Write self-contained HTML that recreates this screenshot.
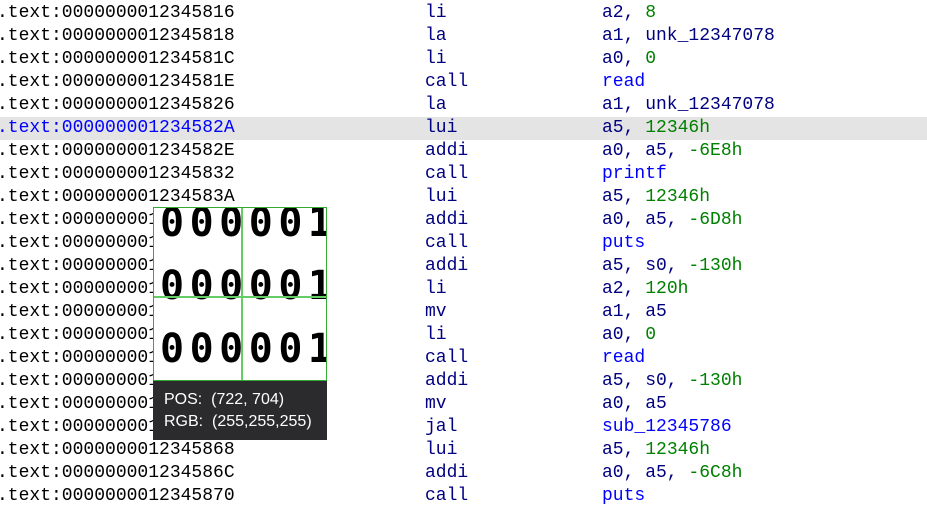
<!DOCTYPE html>
<html><head><style>
body{margin:0;width:927px;height:509px;overflow:hidden;background:#fff;font-family:"Liberation Mono",monospace;font-size:18px;position:relative}
.r{position:absolute;left:-3px;height:23px;line-height:23px;width:930px;white-space:pre}
.r span{position:absolute;top:0}
.a{left:0;color:#000}
.m{left:428px;color:#000080}
.o{left:605px;color:#000080}
.n{color:#008000}.f{color:#0000ff}
.hl{background:#e4e4e4}
#mag{position:absolute;left:153px;top:207px;width:172px;height:172px;border:1px solid #3a3;background:#fff;overflow:hidden}
#mag div{position:absolute;left:6px;font-family:"DejaVu Sans Mono",monospace;font-size:40px;font-weight:bold;color:#000;line-height:40px;letter-spacing:5.5px;white-space:pre}
#tip{position:absolute;left:153px;top:381px;width:174px;height:59px;background:#2b2b2d;color:#fff;font-family:"Liberation Sans",sans-serif;font-size:16px;line-height:22px;padding-top:8px;box-sizing:border-box;padding-left:11px}
</style></head><body>
<div class="r" style="top:2px"><span class="a">.text:0000000012345816</span><span class="m">li</span><span class="o">a2, <i class="n" style="font-style:normal">8</i></span></div>
<div class="r" style="top:25px"><span class="a">.text:0000000012345818</span><span class="m">la</span><span class="o">a1, unk_12347078</span></div>
<div class="r" style="top:48px"><span class="a">.text:000000001234581C</span><span class="m">li</span><span class="o">a0, <i class="n" style="font-style:normal">0</i></span></div>
<div class="r" style="top:71px"><span class="a">.text:000000001234581E</span><span class="m">call</span><span class="o f">read</span></div>
<div class="r" style="top:94px"><span class="a">.text:0000000012345826</span><span class="m">la</span><span class="o">a1, unk_12347078</span></div>
<div class="r hl" style="top:117px"><span class="a" style="color:#0000ff">.text:000000001234582A</span><span class="m">lui</span><span class="o">a5, <i class="n" style="font-style:normal">12346h</i></span></div>
<div class="r" style="top:140px"><span class="a">.text:000000001234582E</span><span class="m">addi</span><span class="o">a0, a5, <i class="n" style="font-style:normal">-6E8h</i></span></div>
<div class="r" style="top:163px"><span class="a">.text:0000000012345832</span><span class="m">call</span><span class="o f">printf</span></div>
<div class="r" style="top:186px"><span class="a">.text:000000001234583A</span><span class="m">lui</span><span class="o">a5, <i class="n" style="font-style:normal">12346h</i></span></div>
<div class="r" style="top:209px"><span class="a">.text:0000000012345840</span><span class="m">addi</span><span class="o">a0, a5, <i class="n" style="font-style:normal">-6D8h</i></span></div>
<div class="r" style="top:232px"><span class="a">.text:0000000012345848</span><span class="m">call</span><span class="o f">puts</span></div>
<div class="r" style="top:255px"><span class="a">.text:0000000012345850</span><span class="m">addi</span><span class="o">a5, s0, <i class="n" style="font-style:normal">-130h</i></span></div>
<div class="r" style="top:278px"><span class="a">.text:0000000012345854</span><span class="m">li</span><span class="o">a2, <i class="n" style="font-style:normal">120h</i></span></div>
<div class="r" style="top:301px"><span class="a">.text:0000000012345858</span><span class="m">mv</span><span class="o">a1, a5</span></div>
<div class="r" style="top:324px"><span class="a">.text:000000001234585A</span><span class="m">li</span><span class="o">a0, <i class="n" style="font-style:normal">0</i></span></div>
<div class="r" style="top:347px"><span class="a">.text:000000001234585C</span><span class="m">call</span><span class="o f">read</span></div>
<div class="r" style="top:370px"><span class="a">.text:000000001234585E</span><span class="m">addi</span><span class="o">a5, s0, <i class="n" style="font-style:normal">-130h</i></span></div>
<div class="r" style="top:393px"><span class="a">.text:0000000012345862</span><span class="m">mv</span><span class="o">a0, a5</span></div>
<div class="r" style="top:416px"><span class="a">.text:0000000012345864</span><span class="m">jal</span><span class="o f">sub_12345786</span></div>
<div class="r" style="top:439px"><span class="a">.text:0000000012345868</span><span class="m">lui</span><span class="o">a5, <i class="n" style="font-style:normal">12346h</i></span></div>
<div class="r" style="top:462px"><span class="a">.text:000000001234586C</span><span class="m">addi</span><span class="o">a0, a5, <i class="n" style="font-style:normal">-6C8h</i></span></div>
<div class="r" style="top:485px"><span class="a">.text:0000000012345870</span><span class="m">call</span><span class="o f">puts</span></div>
<div id="mag">
<div style="top:-5px">000001</div>
<div style="top:58px">000001</div>
<div style="top:121px">000001</div>
<span style="position:absolute;left:87px;top:0;width:2px;height:172px;background:#6c6"></span>
<span style="position:absolute;left:0;top:88px;width:172px;height:2px;background:#6c6"></span>
</div>
<div id="tip">POS:&nbsp; (722, 704)<br>RGB:&nbsp; (255,255,255)</div>
</body></html>
